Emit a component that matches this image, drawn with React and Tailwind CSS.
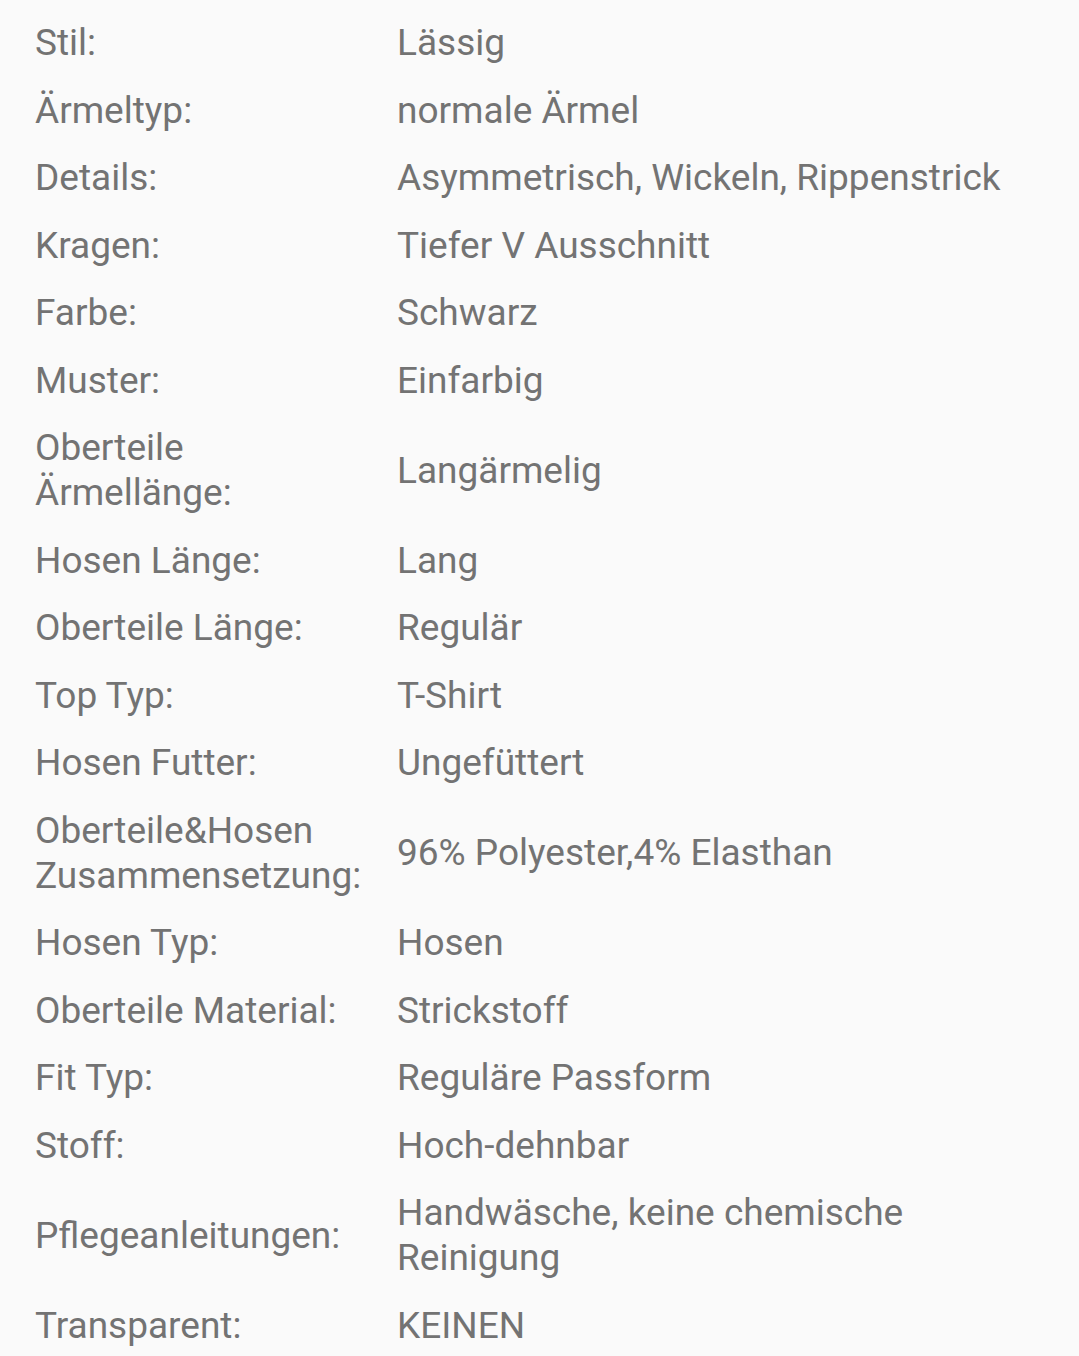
const rows = [
  ["Stil:", "Lässig"],
  ["Ärmeltyp:", "normale Ärmel"],
  ["Details:", "Asymmetrisch, Wickeln, Rippenstrick"],
  ["Kragen:", "Tiefer V Ausschnitt"],
  ["Farbe:", "Schwarz"],
  ["Muster:", "Einfarbig"],
  ["Oberteile Ärmellänge:", "Langärmelig"],
  ["Hosen Länge:", "Lang"],
  ["Oberteile Länge:", "Regulär"],
  ["Top Typ:", "T-Shirt"],
  ["Hosen Futter:", "Ungefüttert"],
  ["Oberteile&Hosen Zusammensetzung:", "96% Polyester,4% Elasthan"],
  ["Hosen Typ:", "Hosen"],
  ["Oberteile Material:", "Strickstoff"],
  ["Fit Typ:", "Reguläre Passform"],
  ["Stoff:", "Hoch-dehnbar"],
  ["Pflegeanleitungen:", "Handwäsche, keine chemische Reinigung"],
  ["Transparent:", "KEINEN"],
];

export default function App() {
  return (
    <div
      className="w-[1079px] h-[1356px] overflow-hidden bg-[#fafafa] text-[#737373] pt-[9px] pl-[35px] pr-[35px]"
      style={{ fontFamily: "Roboto, 'Noto Sans', sans-serif" }}
    >
      {rows.map(([k, v]) => (
        <div key={k} className="grid grid-cols-[362px_1fr] items-center py-[11.25px] text-[37px] leading-[45px]">
          <div className="pr-[24px]">{k}</div>
          <div>{v}</div>
        </div>
      ))}
    </div>
  );
}
